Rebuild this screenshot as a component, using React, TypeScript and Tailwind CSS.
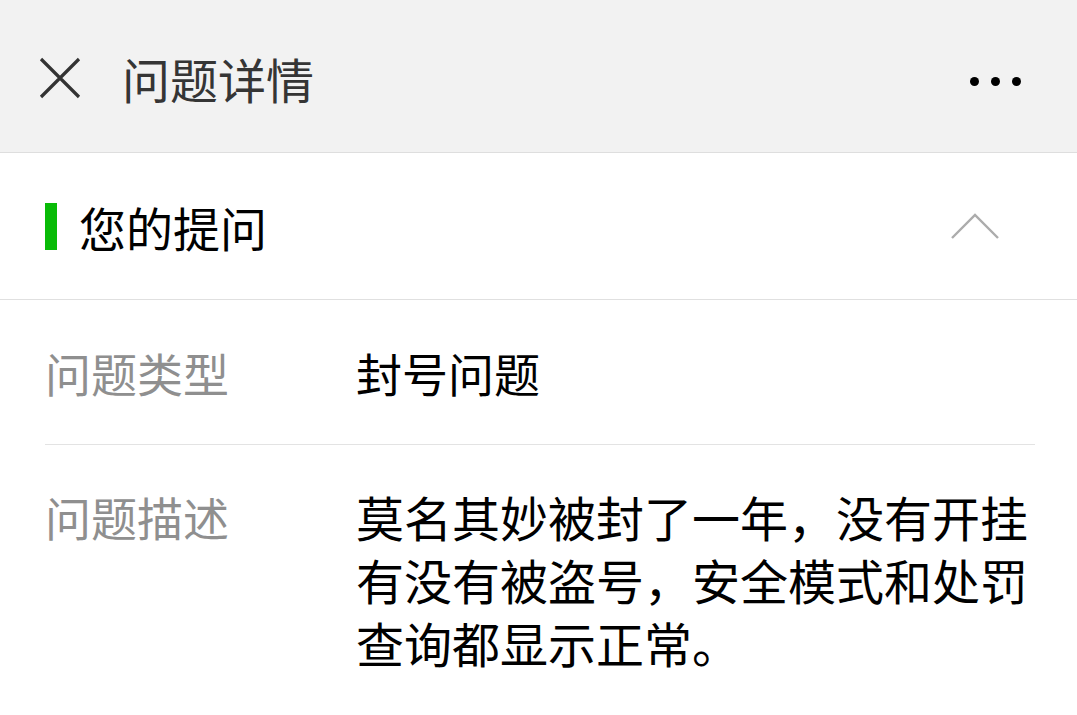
const font = { fontFamily: '"Noto Sans CJK SC", "Noto Sans", sans-serif' };

function CloseIcon() {
  return (
    <svg width="44" height="44" viewBox="0 0 44 44" className="mt-[4px] shrink-0">
      <path d="M3 3 L41 41 M41 3 L3 41" stroke="#333" strokeWidth="3.2" fill="none" />
    </svg>
  );
}

function MoreIcon() {
  return (
    <div className="mt-[11px] flex items-center gap-[12px]">
      <span className="block h-[9px] w-[9px] rounded-full bg-black" />
      <span className="block h-[9px] w-[9px] rounded-full bg-black" />
      <span className="block h-[9px] w-[9px] rounded-full bg-black" />
    </div>
  );
}

function ChevronUp() {
  return (
    <svg width="48" height="26" viewBox="0 0 48 26">
      <path d="M1 25 L24 2 L47 25" stroke="#acacac" strokeWidth="2.4" fill="none" />
    </svg>
  );
}

export default function App() {
  return (
    <div className="h-[715px] w-[1077px] overflow-hidden bg-white" style={font}>
      <header className="flex h-[153px] items-center border-b border-[#dedede] bg-[#f2f2f2] pl-[38px] pr-[56px]">
        <CloseIcon />
        <h1 className="ml-[40px] mt-[4px] flex-1 text-[48px] leading-none text-[#353535]">问题详情</h1>
        <MoreIcon />
      </header>

      <section>
        <div className="flex h-[147px] items-center border-b border-[#e0e0e0] pl-[45px] pr-[78px]">
          <span className="block h-[47px] w-[12px] bg-[#09bb07]" />
          <span className="ml-[22px] flex-1 text-[47px] leading-none text-black">您的提问</span>
          <ChevronUp />
        </div>

        <div className="flex h-[144px] items-center pl-[45px] pr-[42px]">
          <span className="w-[311px] shrink-0 text-[46px] leading-none text-[#8f8f8f]">问题类型</span>
          <span className="flex-1 text-[46px] leading-none text-black">封号问题</span>
        </div>

        <div className="ml-[45px] mr-[42px] border-t border-[#e3e3e3]" />

        <div className="flex pl-[45px] pr-[42px] pt-[40px]">
          <span className="w-[311px] shrink-0 text-[46px] leading-[63px] text-[#8f8f8f]">问题描述</span>
          <p className="flex-1 text-[48px] leading-[63px] text-black">
            莫名其妙被封了一年，没有开挂有没有被盗号，安全模式和处罚查询都显示正常。
          </p>
        </div>
      </section>
    </div>
  );
}
